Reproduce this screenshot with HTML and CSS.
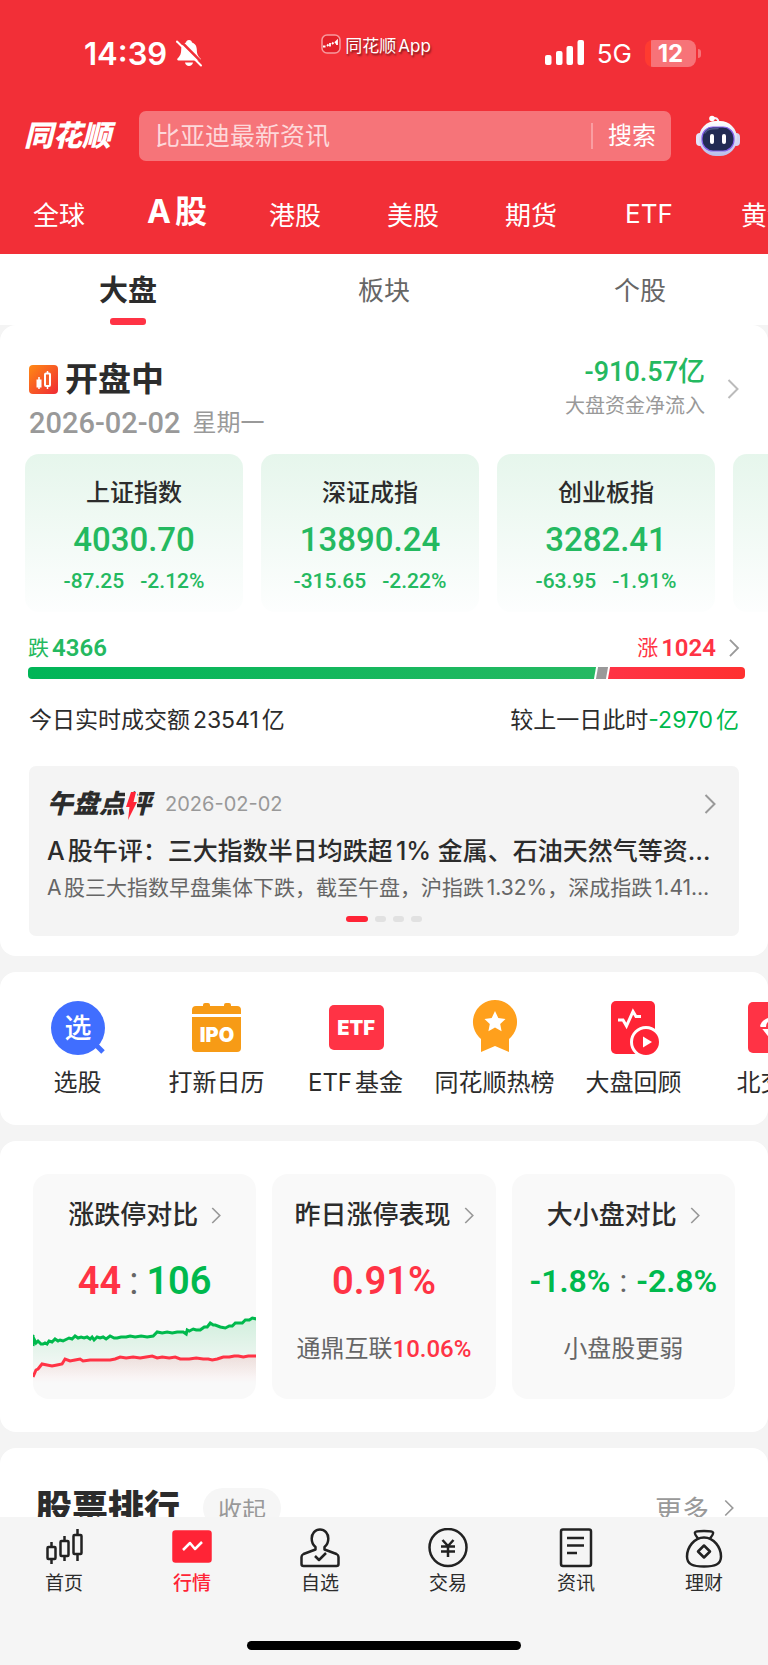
FILE: index.html
```html
<!DOCTYPE html>
<html lang="zh-CN">
<head>
  <meta charset="UTF-8">
  <meta name="viewport" content="width=device-width, initial-scale=1.0">
  <title>同花顺 行情</title>
  <link rel="stylesheet" href="styles.css">
</head>
<body>
  <svg class="defs" aria-hidden="true">
    <symbol id="chevron" viewBox="0 0 12 20">
      <path d="M1.5 1 L10.5 10 L1.5 19" fill="none" stroke="currentColor" stroke-width="2"/>
    </symbol>
  </svg>

  <header class="header">
    <div class="status">
      <div class="status-time">
        <span>14:39</span>
        <svg width="28" height="28" viewBox="0 0 28 28">
          <path d="M14 1c-1.800 0-2.800 1.100-3 2.400C7.500 4.500 6.300 7.500 6.200 10.500c-.1 4.500-1 6.300-3.500 8.800-.8.900-.6 2.200.8 2.200h21c1.400 0 1.600-1.300.8-2.200-2.500-2.500-3.400-4.300-3.500-8.800C21.700 7.500 20.500 4.500 17 3.400c-.2-1.300-1.200-2.400-3-2.400zM10 23.500c.4 2.200 2 3.500 4 3.500s3.600-1.300 4-3.500z" fill="#fff"/>
          <path d="M4.500 1 L28 24.500" stroke="#f22f37" stroke-width="2.500"/>
          <path d="M2 2.500 L26 26.500" stroke="#fff" stroke-width="2" stroke-linecap="round"/>
        </svg>
      </div>
      <div class="status-app">
        <svg width="20" height="20" viewBox="0 0 20 20">
          <rect x="1" y="1" width="18" height="18" rx="5" fill="#e3202a" stroke="#f79a9e" stroke-width="1.500"/>
          <path d="M2 12.500h2.500M6 12l1.500-1.500M9 12.500V9M11 10l1.500-1.500M14 9l2-2v4" fill="none" stroke="#fff" stroke-width="1.800"/>
        </svg>
        <span>同花顺App</span>
      </div>
      <div class="status-right">
        <svg width="39" height="26" viewBox="0 0 39 26" fill="#fff">
          <rect x="0" y="15" width="6.500" height="10" rx="2"/>
          <rect x="11" y="11" width="6.500" height="14" rx="2"/>
          <rect x="21.500" y="6" width="6.500" height="19" rx="2"/>
          <rect x="32.500" y="0" width="6.500" height="25" rx="2"/>
        </svg>
        <span class="network">5G</span>
        <span class="battery">12</span>
      </div>
    </div>

    <div class="search-row">
      <h1 class="logo">同花顺</h1>
      <form class="search">
        <input type="text" class="search-input" aria-label="搜索" placeholder="比亚迪最新资讯">
        <button type="button" class="search-btn">搜索</button>
      </form>
      <button type="button" class="robot" aria-label="智能助手">
        <svg width="44" height="42" viewBox="0 0 44 42">
          <defs>
            <linearGradient id="robot-head" x1="0" y1="0" x2="0" y2="1">
              <stop offset="0" stop-color="#fff"/>
              <stop offset="1" stop-color="#b9bdea"/>
            </linearGradient>
          </defs>
          <path d="M16 3.500c4-1.500 6.500.500 6.500 4" fill="none" stroke="#f3f3ff" stroke-width="2"/>
          <circle cx="16" cy="3.500" r="2.800" fill="#fff"/>
          <rect x="0" y="18" width="8" height="13" rx="4" fill="#e4e6fa"/>
          <rect x="36" y="18" width="8" height="13" rx="4" fill="#d3d5f3"/>
          <rect x="3" y="6" width="38" height="35" rx="17" fill="url(#robot-head)"/>
          <rect x="6" y="12" width="32" height="24" rx="11" fill="#222b52" stroke="#8662ec" stroke-width="1.200"/>
          <path d="M9 18c2-4 6-4.500 13-4.500" fill="none" stroke="#4a5687" stroke-width="1.500" stroke-linecap="round"/>
          <rect x="14" y="19" width="4" height="10" rx="2" fill="#fff"/>
          <rect x="26" y="19" width="4" height="10" rx="2" fill="#fff"/>
        </svg>
      </button>
    </div>

    <nav class="markets">
      <a href="#">全球</a>
      <a href="#" class="active">A股</a>
      <a href="#">港股</a>
      <a href="#">美股</a>
      <a href="#">期货</a>
      <a href="#">ETF</a>
      <a href="#">黄金</a>
    </nav>
  </header>

  <main>
    <div class="tabs">
      <button type="button" class="tab active">大盘</button>
      <button type="button" class="tab">板块</button>
      <button type="button" class="tab">个股</button>
    </div>

    <section class="card overview">
      <div class="overview-head">
        <div class="session">
          <h2>
            <svg width="29" height="29" viewBox="0 0 29 29">
              <defs>
                <linearGradient id="session-bg" x1="0" y1="0" x2="1" y2="1">
                  <stop offset="0" stop-color="#ff8a14"/>
                  <stop offset="1" stop-color="#f02a35"/>
                </linearGradient>
              </defs>
              <rect width="29" height="29" rx="4" fill="url(#session-bg)"/>
              <path d="M10 12v12M18.500 6v18" stroke="#fff" stroke-width="1.500"/>
              <rect x="7.500" y="14.500" width="5" height="8" fill="#fff"/>
              <rect x="16" y="8.500" width="5" height="12.500" rx="1" fill="#f5602a" stroke="#fff" stroke-width="2"/>
            </svg>
            开盘中
          </h2>
          <p><span class="num">2026-02-02</span><span>星期一</span></p>
        </div>
        <a href="#" class="flow">
          <span class="flow-text">
            <span class="flow-value num">-910.57亿</span>
            <span class="flow-label">大盘资金净流入</span>
          </span>
          <svg class="chevron" width="12" height="20"><use href="#chevron"/></svg>
        </a>
      </div>

      <div class="indices">
        <a href="#" class="index">
          <span class="index-name">上证指数</span>
          <span class="index-value">4030.70</span>
          <span class="index-change"><span>-87.25</span><span>-2.12%</span></span>
        </a>
        <a href="#" class="index">
          <span class="index-name">深证成指</span>
          <span class="index-value">13890.24</span>
          <span class="index-change"><span>-315.65</span><span>-2.22%</span></span>
        </a>
        <a href="#" class="index">
          <span class="index-name">创业板指</span>
          <span class="index-value">3282.41</span>
          <span class="index-change"><span>-63.95</span><span>-1.91%</span></span>
        </a>
        <a href="#" class="index" aria-label="更多指数"></a>
      </div>

      <div class="breadth">
        <span class="fall">跌<b>4366</b></span>
        <span class="rise">涨<b>1024</b><svg class="chevron" width="12" height="18"><use href="#chevron"/></svg></span>
      </div>
      <div class="breadth-bar">
        <span class="bar-fall"></span>
        <span class="bar-flat"></span>
        <span class="bar-rise"></span>
      </div>

      <div class="turnover">
        <span>今日实时成交额23541亿</span>
        <span>较上一日此时<em>-2970亿</em></span>
      </div>

      <article class="review">
        <div class="review-head">
          <h3>午盘点<span class="bolt">评<svg width="12" height="28" viewBox="0 0 12 28">
            <rect width="12" height="28" fill="#f4f4f4"/>
            <path d="M6 0h5L8.500 10H12L3 28l1.500-13H1z" fill="#ff2436"/>
          </svg></span></h3>
          <time>2026-02-02</time>
          <svg class="chevron" width="12" height="20"><use href="#chevron"/></svg>
        </div>
        <p class="review-title">A股午评：三大指数半日均跌超1% 金属、石油天然气等资…</p>
        <p class="review-text">A股三大指数早盘集体下跌，截至午盘，沪指跌1.32%，深成指跌1.41…</p>
        <div class="dots"><i class="active"></i><i></i><i></i><i></i></div>
      </article>
    </section>

    <section class="card shortcuts">
      <a href="#">
        <svg width="56" height="56" viewBox="0 0 56 56">
          <path d="M44 43 L53 52" stroke="#406eff" stroke-width="5"/>
          <circle cx="28" cy="28" r="27" fill="#406eff"/>
          <text x="28" y="38" class="glyph-xuan">选</text>
        </svg>
        选股
      </a>
      <a href="#">
        <svg width="56" height="56" viewBox="0 0 56 56" fill="#f79b16">
          <path d="M3 14V10q0-4 4-4h7V5q0-2 2-2h3q2 0 2 2v1h14V5q0-2 2-2h3q2 0 2 2v1h6q4 0 4 4v4z"/>
          <path d="M3 17h49v31q0 4-4 4H7q-4 0-4-4z"/>
          <text x="28" y="42" class="glyph-latin">IPO</text>
        </svg>
        打新日历
      </a>
      <a href="#">
        <svg width="56" height="56" viewBox="0 0 56 56">
          <rect x="1" y="5" width="55" height="45" rx="5" fill="#ff3345"/>
          <text x="28" y="35" class="glyph-latin">ETF</text>
        </svg>
        ETF基金
      </a>
      <a href="#">
        <svg width="56" height="56" viewBox="0 0 56 56">
          <path d="M28 0a22 22 0 0 1 14 39v13L28 46l-14 6V39A22 22 0 0 1 28 0z" fill="#ffa01c"/>
          <path d="M28 11l3.300 7 7.200.900-5.300 5 1.400 7.300L28 27.600l-6.600 3.600 1.400-7.300-5.300-5 7.200-.900z" fill="#fff"/>
        </svg>
        同花顺热榜
      </a>
      <a href="#">
        <svg width="56" height="56" viewBox="0 0 56 56">
          <rect x="5" y="1" width="44" height="53" rx="5" fill="#ff2436"/>
          <path d="M12 20h5l3.500 6L27 11.500l3 5h5" fill="none" stroke="#fff" stroke-width="3"/>
          <circle cx="40" cy="42" r="14.500" fill="#ff2436" stroke="#fff" stroke-width="3"/>
          <path d="M37 36.500v11l9-5.500z" fill="#fff"/>
        </svg>
        大盘回顾
      </a>
      <a href="#">
        <svg width="56" height="56" viewBox="0 0 56 56">
          <rect x="3" y="2" width="51" height="51" rx="5" fill="#ff3345"/>
          <path d="M15 26c2-6 7-9 14-9s12 3 14 9L29 44z" fill="#fff"/>
          <path d="M15 28h28M22 27c0-4 2-6 7-6" fill="none" stroke="#ff3345" stroke-width="2"/>
        </svg>
        北交所
      </a>
    </section>

    <section class="card stats">
      <a href="#" class="stat">
        <span class="stat-title">涨跌停对比<svg class="chevron" width="10" height="17"><use href="#chevron"/></svg></span>
        <span class="stat-value"><b class="up">44</b><i>:</i><b class="down">106</b></span>
        <svg class="stat-chart" viewBox="0 0 223 94" preserveAspectRatio="none">
          <defs>
            <linearGradient id="fill-down" x1="0" y1="0" x2="0" y2="1">
              <stop offset="0" stop-color="#00b94d" stop-opacity=".16"/>
              <stop offset="1" stop-color="#00b94d" stop-opacity="0"/>
            </linearGradient>
            <linearGradient id="fill-up" x1="0" y1="0" x2="0" y2="1">
              <stop offset="0" stop-color="#ff3345" stop-opacity=".12"/>
              <stop offset="1" stop-color="#ff3345" stop-opacity="0"/>
            </linearGradient>
          </defs>
          <path fill="url(#fill-down)" d="M0 35 L10 39 L22 34 L42 32 L67 32 L97 32 L120 31 L124 27 L153 27 L160 24 L177 19 L192 23 L202 19 L223 14 V72 H0z"/>
          <path fill="url(#fill-up)" d="M0 72 L9 59 L29 59 L32 55 L77 55 L87 53 L119 51 L147 54 L179 55 L190 52 L223 51 V78 H0z"/>
          <path class="line-down" d="M0 30 L0 41 L1 34 L3 38 L5 36 L8 39 L10 39 L12 38 L14 39 L16 36 L19 37 L22 34 L25 36 L27 35 L30 36 L34 34 L36 33 L39 34 L42 31 L45 33 L48 32 L51 33 L54 32 L57 34 L59 32 L61 35 L64 32 L67 33 L70 32 L73 34 L77 31 L81 33 L84 33 L88 32 L93 32 L97 31 L102 32 L108 31 L114 32 L120 31 L124 27 L129 28 L134 27 L139 28 L144 27 L150 27 L153 29 L154 25 L156 26 L160 24 L163 25 L167 25 L171 22 L174 22 L177 18 L180 20 L182 20 L187 22 L192 23 L196 21 L199 21 L202 18 L209 18 L212 15 L216 15 L219 13 L223 14"/>
          <path class="line-up" d="M0 72 L3 65 L5 64 L9 59 L14 60 L19 61 L24 60 L29 59 L32 54 L37 56 L42 55 L47 54 L50 56 L57 55 L64 55 L70 55 L77 55 L82 54 L87 52 L93 53 L100 52 L107 53 L113 52 L119 51 L124 53 L129 52 L136 53 L142 52 L147 54 L156 54 L163 53 L170 54 L175 54 L179 55 L184 54 L190 52 L196 52 L201 51 L205 51 L210 52 L215 51 L223 51"/>
        </svg>
      </a>
      <a href="#" class="stat">
        <span class="stat-title">昨日涨停表现<svg class="chevron" width="10" height="17"><use href="#chevron"/></svg></span>
        <span class="stat-value"><b class="up">0.91%</b></span>
        <span class="stat-note">通鼎互联<b class="up">10.06%</b></span>
      </a>
      <a href="#" class="stat">
        <span class="stat-title">大小盘对比<svg class="chevron" width="10" height="17"><use href="#chevron"/></svg></span>
        <span class="stat-value small"><b class="down">-1.8%</b><i>:</i><b class="down">-2.8%</b></span>
        <span class="stat-note">小盘股更弱</span>
      </a>
    </section>

    <section class="card ranking">
      <h2>股票排行</h2>
      <button type="button" class="fold">收起</button>
      <a href="#" class="more">更多<svg class="chevron" width="10" height="18"><use href="#chevron"/></svg></a>
    </section>
  </main>

  <footer class="tabbar">
    <nav>
      <a href="#">
        <svg width="40" height="40" viewBox="0 0 40 40">
          <path d="M7.500 14v5M7.500 31v5M20.500 8v5M20.500 28v5M33.500 1v6M33.500 26v7"/>
          <rect x="3.500" y="19" width="8" height="12" rx="1"/>
          <rect x="16.500" y="13" width="8" height="15" rx="1"/>
          <rect x="29.500" y="7" width="8" height="19" rx="1"/>
        </svg>
        首页
      </a>
      <a href="#" class="active">
        <svg width="40" height="40" viewBox="0 0 40 40">
          <rect x="1.500" y="3.500" width="37" height="30" rx="2" fill="#ff2436" stroke="#ff2436"/>
          <path d="M11 22l7-7 5 6 7-7" stroke="#fff"/>
        </svg>
        行情
      </a>
      <a href="#">
        <svg width="40" height="40" viewBox="0 0 40 40">
          <path d="M15.500 19c-2.500-2-3.800-5-3.800-8.500 0-5 3.400-9 8.300-9s8.300 4 8.300 9c0 3.500-1.300 6.500-3.800 8.500v2.500L36.500 26q2 1 2 3v7q0 2-2 2h-33q-2 0-2-2v-7q0-2 2-3l12-4.500z"/>
          <path d="M15 28l4 4 7-7"/>
        </svg>
        自选
      </a>
      <a href="#">
        <svg width="40" height="40" viewBox="0 0 40 40">
          <circle cx="20" cy="19.500" r="18.500"/>
          <path d="M14.500 12l5.500 6 5.500-6M20 18v11M13 18.500h14M13 23.500h14"/>
        </svg>
        交易
      </a>
      <a href="#">
        <svg width="40" height="40" viewBox="0 0 40 40">
          <rect x="5" y="1.500" width="30" height="36.500" rx="2"/>
          <path d="M11 10h17M11 17.500h17M11 25h10"/>
        </svg>
        资讯
      </a>
      <a href="#">
        <svg width="40" height="40" viewBox="0 0 40 40">
          <path d="M14 10.500c-2-2.500-3.500-4.500-3-6 .6-2 17.400-2 18 0 .5 1.500-1 3.500-3 6"/>
          <path d="M20 9.500c-10 0-17 10-17 19 0 8 6 10 17 10s17-2 17-10c0-9-7-19-17-19z"/>
          <path d="M20 17.500l6 6-6 6-6-6z"/>
        </svg>
        理财
      </a>
    </nav>
    <div class="home-indicator"></div>
  </footer>
</body>
</html>
```
FILE: styles.css
```css
:root {
  --red: #ff3345;
  --brand: #f22f37;
  --green: #24b960;
  --deep-green: #00b94d;
  --text: #2c2c2c;
  --gray: #999;
  --page: #f4f4f4;
  --num-font: Roboto, "Noto Sans CJK SC", sans-serif;
}
* {
  box-sizing: border-box;
}
body {
  height: 100vh;
  margin: 0;
  display: flex;
  flex-direction: column;
  overflow: hidden;
  background: var(--page);
  color: var(--text);
  font-family: Inter, "Noto Sans CJK SC", sans-serif;
  text-autospace: normal;
}
h1, h2, h3, p {
  margin: 0;
}
a {
  color: inherit;
  text-decoration: none;
}
button {
  padding: 0;
  border: 0;
  background: none;
  color: inherit;
  font-family: inherit;
}
i, em {
  font-style: normal;
}
svg {
  flex: none;
}
.defs {
  position: absolute;
  width: 0;
  height: 0;
}
.chevron {
  color: var(--gray);
}
.num {
  font-family: var(--num-font);
  text-autospace: no-autospace;
}
.up {
  color: var(--red);
}
.down {
  color: var(--deep-green);
}

/* 顶部 */
.header {
  flex: none;
  background: var(--brand);
  color: #fff;
}
.status {
  height: 106px;
  padding: 0 72px 0 84px;
  display: grid;
  grid-template-columns: 1fr auto 1fr;
  align-items: center;
}
.status-time {
  display: flex;
  align-items: center;
  gap: 8px;
  font-size: 31px;
  font-weight: 600;
}
.status-app {
  display: flex;
  align-items: center;
  gap: 4px;
  padding: 0 28px 18px 0;
  font-size: 17px;
  text-shadow: 1px 2px 2px rgba(0, 0, 0, 0.5);
}
.status-right {
  display: flex;
  align-items: center;
  justify-content: flex-end;
}
.network {
  margin: 0 13px;
  font-size: 26px;
}
.battery {
  position: relative;
  width: 51px;
  border-radius: 8px;
  background: linear-gradient(90deg, #ff3b30 6px, #f77378 6px);
  font-size: 24px;
  line-height: 27px;
  font-weight: 700;
  text-align: center;
}
.battery::after {
  content: '';
  position: absolute;
  right: -5px;
  top: 9px;
  width: 3px;
  height: 9px;
  border-radius: 0 3px 3px 0;
  background: #f77378;
}
.search-row {
  display: flex;
  align-items: center;
  padding: 5px 28px 0 24px;
}
.logo {
  width: 115px;
  font-size: 29px;
  line-height: 36px;
  font-weight: 900;
  font-style: italic;
}
.search {
  flex: 1;
  min-width: 0;
  height: 50px;
  display: flex;
  align-items: center;
  border-radius: 7px;
  background: #f67479;
}
.search-input {
  flex: 1;
  min-width: 0;
  padding: 0 16px;
  border: 0;
  outline: 0;
  background: none;
  color: #fff;
  font-family: inherit;
  font-size: 25px;
}
.search-input::placeholder {
  color: #fdd8da;
}
.search-btn {
  padding: 0 15px;
  border-left: 2px solid #fa9ea2;
  font-size: 24px;
  line-height: 26px;
}
.robot {
  margin-left: 25px;
}
.robot svg {
  display: block;
}
.markets {
  height: 93px;
  padding-top: 12px;
  display: flex;
  align-items: center;
  overflow: hidden;
  font-size: 26px;
}
.markets a {
  flex: 0 0 118px;
  text-align: center;
}
.markets .active {
  padding-bottom: 10px;
  font-size: 32px;
  font-weight: 700;
}

main {
  flex: 1;
  min-height: 0;
  overflow: hidden;
}
.tabs {
  display: flex;
  background: #fff;
}
.tab {
  flex: 1;
  display: flex;
  flex-direction: column;
  align-items: center;
  padding-top: 18px;
  color: #666;
  font-size: 26px;
  line-height: 38px;
}
.tab::after {
  content: '';
  width: 36px;
  height: 7px;
  margin-top: 8px;
  border-radius: 3px;
}
.tab.active {
  color: var(--text);
  font-size: 29px;
  font-weight: 700;
}
.tab.active::after {
  background: var(--red);
}
.card {
  margin-bottom: 16px;
  border-radius: 16px;
  background: #fff;
}

/* 大盘概览 */
.overview {
  padding: 30px 0 20px;
}
.overview-head {
  display: flex;
  justify-content: space-between;
  align-items: flex-start;
  padding: 0 29px;
}
.session {
  padding-top: 2px;
}
.session h2 {
  display: flex;
  align-items: center;
  gap: 7px;
  font-size: 33px;
  line-height: 44px;
}
.session p {
  display: flex;
  gap: 12px;
  height: 44px;
  color: var(--gray);
  font-size: 24px;
  line-height: 44px;
}
.session .num {
  font-size: 29px;
  font-weight: 500;
}
.flow {
  display: flex;
  align-items: center;
  gap: 22px;
}
.flow .chevron {
  color: #bbb;
}
.flow-text {
  display: flex;
  flex-direction: column;
  text-align: right;
  line-height: 34px;
}
.flow-value {
  height: 34px;
  color: var(--green);
  font-size: 27px;
  font-weight: 500;
}
.flow-label {
  color: var(--gray);
  font-size: 20px;
}
.indices {
  display: flex;
  gap: 18px;
  margin-top: 9px;
  padding-left: 25px;
  overflow: hidden;
}
.index {
  flex: 0 0 218px;
  display: flex;
  flex-direction: column;
  align-items: center;
  padding: 20px 0 18px;
  border-radius: 14px;
  background: linear-gradient(#e6f6ec, #fdfefe);
}
.index-name {
  font-size: 24px;
  line-height: 38px;
  font-weight: 500;
}
.index-value {
  color: var(--green);
  font-family: var(--num-font);
  font-size: 33px;
  line-height: 56px;
  font-weight: 500;
}
.index-change {
  display: flex;
  gap: 16px;
  color: var(--green);
  font-family: var(--num-font);
  font-size: 21px;
  line-height: 26px;
  font-weight: 500;
}
.breadth {
  display: flex;
  justify-content: space-between;
  margin-top: 21px;
  padding: 0 28px;
  font-size: 21px;
  line-height: 30px;
}
.breadth b {
  margin-left: 3px;
  font-family: var(--num-font);
  font-size: 24px;
  font-weight: 600;
}
.fall,
.rise {
  display: flex;
  align-items: center;
}
.fall {
  color: var(--green);
}
.rise {
  color: var(--red);
}
.rise .chevron {
  margin-left: 12px;
}
.breadth-bar {
  display: flex;
  gap: 2px;
  height: 12px;
  margin: 4px 23px 0 28px;
  border-radius: 4px;
  overflow: hidden;
}
.breadth-bar span {
  transform: skewX(-10deg);
}
.bar-fall {
  flex: 571;
  margin-left: -4px;
  background: linear-gradient(90deg, #00b557, #25b962);
}
.bar-flat {
  flex: 10;
  background: #999;
}
.bar-rise {
  flex: 140;
  margin-right: -4px;
  background: linear-gradient(90deg, #ff3345, #ff302f);
}
.turnover {
  display: flex;
  justify-content: space-between;
  margin-top: 25px;
  padding: 0 29px;
  font-size: 23px;
  line-height: 32px;
}
.turnover em {
  color: var(--deep-green);
}

/* 午盘点评 */
.review {
  margin: 30px 29px 0;
  padding: 18px 18px 14px;
  border-radius: 7px;
  background: var(--page);
}
.review-head {
  display: flex;
  align-items: center;
  height: 40px;
}
.review-head h3 {
  font-size: 26px;
  line-height: 40px;
  font-weight: 900;
  font-style: italic;
}
.bolt {
  position: relative;
}
.bolt svg {
  position: absolute;
  left: 0;
  top: 4px;
}
.review-head time {
  flex: 1;
  margin-left: 14px;
  color: var(--gray);
  font-size: 20px;
}
.review-head .chevron {
  margin-right: 5px;
}
.review-title,
.review-text {
  white-space: nowrap;
}
.review-title {
  margin-top: 6px;
  font-size: 25px;
  line-height: 42px;
  font-weight: 500;
}
.review-text {
  color: #666;
  font-size: 21px;
  line-height: 32px;
}
.dots {
  display: flex;
  justify-content: center;
  gap: 7px;
  margin-top: 12px;
}
.dots i {
  width: 11px;
  height: 6px;
  border-radius: 3px;
  background: #e1e1e1;
}
.dots .active {
  width: 22px;
  background: #ff2436;
}

/* 快捷入口 */
.shortcuts {
  display: flex;
  padding: 28px 0 27px 8px;
  overflow: hidden;
}
.shortcuts a {
  flex: 0 0 139px;
  display: flex;
  flex-direction: column;
  align-items: center;
  gap: 12px;
  font-size: 24px;
  line-height: 30px;
  white-space: nowrap;
}
.shortcuts text {
  fill: #fff;
  text-anchor: middle;
}
.glyph-xuan {
  font-size: 27px;
  font-weight: 500;
}
.glyph-latin {
  font-size: 20px;
  font-weight: 900;
}

/* 涨跌统计 */
.stats {
  display: grid;
  grid-template-columns: repeat(3, 1fr);
  gap: 16px;
  padding: 33px;
}
.stat {
  height: 225px;
  padding-top: 22px;
  border-radius: 16px;
  background: #f9f9f9;
  overflow: hidden;
  display: flex;
  flex-direction: column;
  align-items: center;
}
.stat-title {
  display: flex;
  align-items: center;
  gap: 13px;
  font-size: 26px;
  line-height: 38px;
  font-weight: 500;
}
.stat-value {
  display: flex;
  gap: 8px;
  margin-top: 23px;
  font-family: var(--num-font);
  font-size: 38px;
  line-height: 48px;
}
.stat-value b {
  font-weight: 600;
}
.stat-value i {
  color: #666;
}
.stat-value.small {
  gap: 9px;
  font-size: 32px;
}
.stat-note {
  margin-top: 28px;
  color: #666;
  font-size: 24px;
  line-height: 32px;
  text-autospace: no-autospace;
}
.stat-note b {
  font-family: var(--num-font);
  font-weight: 500;
}
.stat-chart {
  width: 100%;
  height: 94px;
}
.line-down,
.line-up {
  fill: none;
  stroke: var(--deep-green);
  stroke-width: 3;
}
.line-up {
  stroke: var(--red);
}

/* 股票排行 */
.ranking {
  display: flex;
  align-items: center;
  padding: 38px 34px 40px 36px;
  color: var(--gray);
}
.ranking h2 {
  color: var(--text);
  font-size: 36px;
  line-height: 44px;
  font-weight: 900;
}
.fold {
  width: 78px;
  height: 40px;
  margin-left: 23px;
  border-radius: 20px;
  background: #f6f6f6;
  font-size: 24px;
}
.more {
  display: flex;
  align-items: center;
  gap: 15px;
  margin-left: auto;
  font-size: 27px;
}

/* 底部导航 */
.tabbar {
  flex: none;
  padding: 11px 0 15px;
  background: #f5f5f5;
}
.tabbar nav {
  display: flex;
}
.tabbar a {
  flex: 1;
  display: flex;
  flex-direction: column;
  align-items: center;
  gap: 4px;
  font-size: 19px;
  line-height: 24px;
}
.tabbar svg {
  fill: none;
  stroke: #222;
  stroke-width: 2.5;
  stroke-linejoin: round;
}
.tabbar .active {
  color: #ff2436;
  font-weight: 500;
}
.home-indicator {
  width: 274px;
  height: 9px;
  margin: 45px auto 0;
  border-radius: 5px;
  background: #000;
}
```
